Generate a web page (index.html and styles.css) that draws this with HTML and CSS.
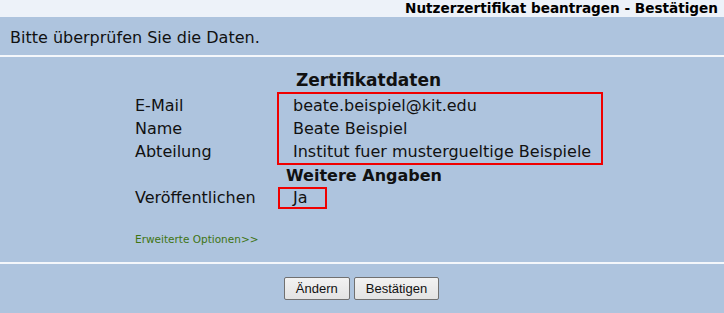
FILE: index.html
```html
<!DOCTYPE html>
<html lang="de">
<head>
    <meta charset="UTF-8">
    <title>Nutzerzertifikat beantragen</title>
    <link rel="stylesheet" href="styles.css">
</head>
<body>

    <!-- Title -->
    <div class="titlebar">Nutzerzertifikat beantragen - Bestätigen</div>

    <!-- Hint -->
    <div class="notice">Bitte überprüfen Sie die Daten.</div>

    <!-- Data -->
    <div class="content">
        <div class="form">
            <h3>Zertifikatdaten</h3>
            <div class="group">
                <div class="labels">
                    <div class="row">E-Mail</div>
                    <div class="row">Name</div>
                    <div class="row">Abteilung</div>
                </div>
                <div class="box">
                    <div class="row">beate.beispiel@kit.edu</div>
                    <div class="row">Beate Beispiel</div>
                    <div class="row">Institut fuer mustergueltige Beispiele</div>
                </div>
            </div>

            <h3 class="second">Weitere Angaben</h3>
            <div class="group">
                <div class="labels">
                    <div class="row small">Veröffentlichen</div>
                </div>
                <div class="box narrow">
                    <div class="row small">Ja</div>
                </div>
            </div>

            <a href="#" class="more">Erweiterte Optionen&gt;&gt;</a>
        </div>
    </div>

    <!-- Buttons -->
    <div class="actions">
        <button type="button">Ändern</button>
        <button type="button">Bestätigen</button>
    </div>

</body>
</html>
```

FILE: styles.css
```css
/* General */
body {
    margin: 0;
    background: #aec4de;
    font-family: "DejaVu Sans", Verdana, sans-serif;
    color: #111;
}

/* Title bar */
.titlebar {
    height: 17px;
    line-height: 17px;
    background: #edf2f9;
    text-align: right;
    padding-right: 6px;
    font-weight: bold;
    font-size: 13.6px;
    color: #000;
}

.notice {
    height: 38px;
    line-height: 42px;
    padding-left: 10px;
    font-size: 16px;
    border-bottom: 2px solid #f4f7fb;
}

/* Form */
.content {
    padding: 12px 0 16px;
    border-bottom: 2px solid #f4f7fb;
}

.form {
    width: 467px;
    margin-left: 135px;
}

.form h3 {
    margin: 0 0 1px;
    height: 22px;
    line-height: 22px;
    text-align: center;
    font-size: 17px;
}

.form h3.second {
    margin: 0;
    padding-right: 9px;
    font-size: 16px;
}

.group {
    display: flex;
    font-size: 16px;
}

.labels {
    width: 142px;
    flex-shrink: 0;
    padding-top: 2px;
}

.row {
    height: 23px;
    line-height: 23px;
    white-space: nowrap;
}

.row.small {
    height: 18px;
    line-height: 18px;
}

.box {
    flex-shrink: 0;
    border: 2px solid #f00000;
    padding: 0 10px 0 14px;
}

.box.narrow {
    margin-left: 1px;
    padding: 0 17px 0 13px;
}

.more {
    display: block;
    margin-top: 24px;
    font-size: 10.5px;
    line-height: 13px;
    color: #3f7412;
    text-decoration: none;
}

/* Buttons */
.actions {
    display: flex;
    justify-content: center;
    gap: 4px;
    padding-top: 13px;
    padding-right: 1px;
}

.actions button {
    height: 23px;
    padding: 0 11px;
    font-family: "Liberation Sans", Arial, sans-serif;
    font-size: 13px;
    color: #111;
    background: linear-gradient(#f2f2f2, #e3e3e3);
    border: 1px solid #707070;
    border-radius: 2px;
}
```
